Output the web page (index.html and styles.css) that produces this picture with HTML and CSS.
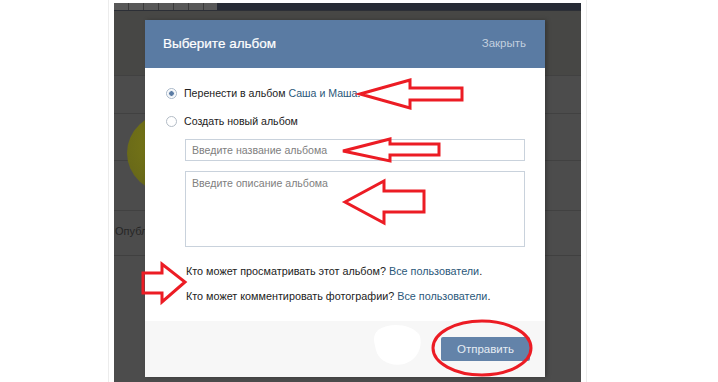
FILE: index.html
```html
<!DOCTYPE html>
<html>
	<head>
		<meta charset="utf-8" />
		<title>Выберите альбом</title>
		<link rel="stylesheet" href="styles.css">
	</head>
	<body>
		<div class="frame">
			<div class="screen">
				<div class="top-strip">
					<div class="strip-left"></div>
					<div class="strip-right"></div>
				</div>
				<div class="bg-avatar"></div>
				<div class="bg-text">Опубликовать</div>

				<div class="dialog">
					<div class="dialog-head">
						<span class="dialog-title">Выберите альбом</span>
						<span class="dialog-close">Закрыть</span>
					</div>
					<div class="dialog-body">
						<div class="radio-row">
							<span class="radio radio-on"></span>
							<span>Перенести в альбом <a class="link">Саша и Маша</a>.</span>
						</div>
						<div class="radio-row">
							<span class="radio"></span>
							<span>Создать новый альбом</span>
						</div>
						<div class="field">Введите название альбома</div>
						<div class="field field-area">Введите описание альбома</div>
						<p class="rule">Кто может просматривать этот альбом? <a class="link">Все пользователи</a>.</p>
						<p class="rule rule-next">Кто может комментировать фотографии? <a class="link">Все пользователи</a>.</p>
					</div>
					<div class="dialog-foot">
						<span class="btn">Отправить</span>
					</div>
				</div>
			</div>
		</div>

		<!-- красные пометки поверх скриншота -->
		<svg class="marks" width="718" height="382" viewBox="0 0 718 382">
			<path d="M378,330 C390,322 410,324 419,334 C424,345 418,360 404,364 C390,367 378,360 376,350 C374,342 372,336 378,330 Z" fill="#fff" />
			<g fill="none" stroke="#ec1c24" stroke-width="3" stroke-linejoin="miter">
				<polygon points="360,94 410,80 410,88 462,88 462,100 410,100 410,108" />
				<polygon points="343,151 390,139 390,144 439,144 439,155 390,155 390,161" />
				<polygon points="345,202 384,181 384,191 424,191 424,212 384,212 384,223" />
				<polygon points="143,273 162,273 162,264 185,282 162,302 162,293 143,293" />
				<ellipse cx="482" cy="348" rx="49" ry="27" />
			</g>
		</svg>
	</body>
</html>
```

FILE: styles.css
```css
*{
	margin: 0;
	padding: 0;
	box-sizing: border-box;
}

html,body{
	width: 100%;
	height: 100%;
	overflow: hidden;
}

body{
	position: relative;
	background-color: #fff;
	font-family: "Liberation Sans", Arial, sans-serif;
	font-size: 10.6px;
	color: #222;
}

.frame{
	width: 479px;
	height: 382px;
	margin-left: 108px;
	padding: 3px 5px 0 5px;
	border-left: 1px solid #ececec;
	border-right: 1px solid #ececec;
}

.screen{
	position: relative;
	height: 379px;
	overflow: hidden;
	background-color: #4c4c4c;
	background-image:
		linear-gradient(#474745, #474745),
		linear-gradient(#414141, #414141),
		linear-gradient(#414141, #414141),
		linear-gradient(#414141, #414141),
		linear-gradient(#414141, #414141),
		linear-gradient(#404040, #404040);
	background-repeat: no-repeat;
	background-size: 100% 64px, 100% 1px, 100% 1px, 100% 1px, 100% 1px, 100% 1px;
	background-position: 0 8px, 0 72px, 0 110px, 0 157px, 0 207px, 0 252px;
}

.top-strip{
	display: flex;
	height: 8px;
	border-bottom: 1px solid #2c2f36;
}

.strip-left{
	width: 103px;
	background: repeating-linear-gradient(90deg, #585858 0, #585858 14px, #3a3a3a 14px, #3a3a3a 15px);
}

.strip-right{
	flex: 1;
	background-color: #272b35;
}

.bg-avatar{
	position: absolute;
	left: 13px;
	top: 110px;
	width: 84px;
	height: 80px;
	border-radius: 50%;
	background: radial-gradient(circle at 45% 40%, #7b7a15, #6a6a18 60%, #565620);
}

.bg-text{
	position: absolute;
	left: 1px;
	top: 222px;
	font-size: 11px;
	color: #262626;
}

.dialog{
	position: relative;
	z-index: 1;
	width: 400px;
	margin: 9px 0 0 31px;
	background-color: #fff;
	box-shadow: 2px 0 4px rgba(0,0,0, 0.25);
}

.dialog-head{
	display: flex;
	justify-content: space-between;
	align-items: center;
	height: 48px;
	padding: 0 19px 2px 18px;
	background-color: #5a7ba3;
}

.dialog-title{
	font-size: 13.5px;
	color: #fff;
	-webkit-text-stroke: 0.2px #fff;
}

.dialog-close{
	font-size: 11.5px;
	color: #c3d0df;
}

.dialog-body{
	padding: 16px 20px 16px 21px;
}

.radio-row{
	display: flex;
	align-items: center;
	height: 18px;
	gap: 7px;
}

.radio-row + .radio-row{
	margin-top: 10px;
}

.radio{
	width: 11px;
	height: 11px;
	border-radius: 50%;
	border: 1px solid #b3bcc6;
	background-color: #fff;
}

.radio-on{
	border-color: #a9b8c9;
	background: radial-gradient(circle, #5b7ca4 0, #5b7ca4 2px, #dfe6ee 2.5px, #fff 4px);
}

.link{
	color: #2b587a;
}

.field{
	height: 22px;
	margin: 9px 0 0 19px;
	padding: 4px 6px 0;
	border: 1px solid #c9d2dc;
	color: #808080;
	line-height: 13px;
}

.field-area{
	height: 76px;
	margin-top: 10px;
	padding-top: 5px;
}

.rule{
	height: 18px;
	line-height: 18px;
	margin: 15px 0 0 20px;
	font-size: 10.8px;
}

.rule-next{
	margin-top: 7px;
}

.dialog-foot{
	display: flex;
	justify-content: flex-end;
	height: 56px;
	padding: 16px 15px 0 0;
	background-color: #f7f7f7;
}

.btn{
	width: 89px;
	height: 24px;
	line-height: 24px;
	text-align: center;
	border-radius: 2px;
	background-color: #6383a9;
	color: #e6edf4;
	font-size: 11.5px;
}

.marks{
	position: absolute;
	z-index: 2;
	left: 0;
	top: 0;
	pointer-events: none;
}
```
